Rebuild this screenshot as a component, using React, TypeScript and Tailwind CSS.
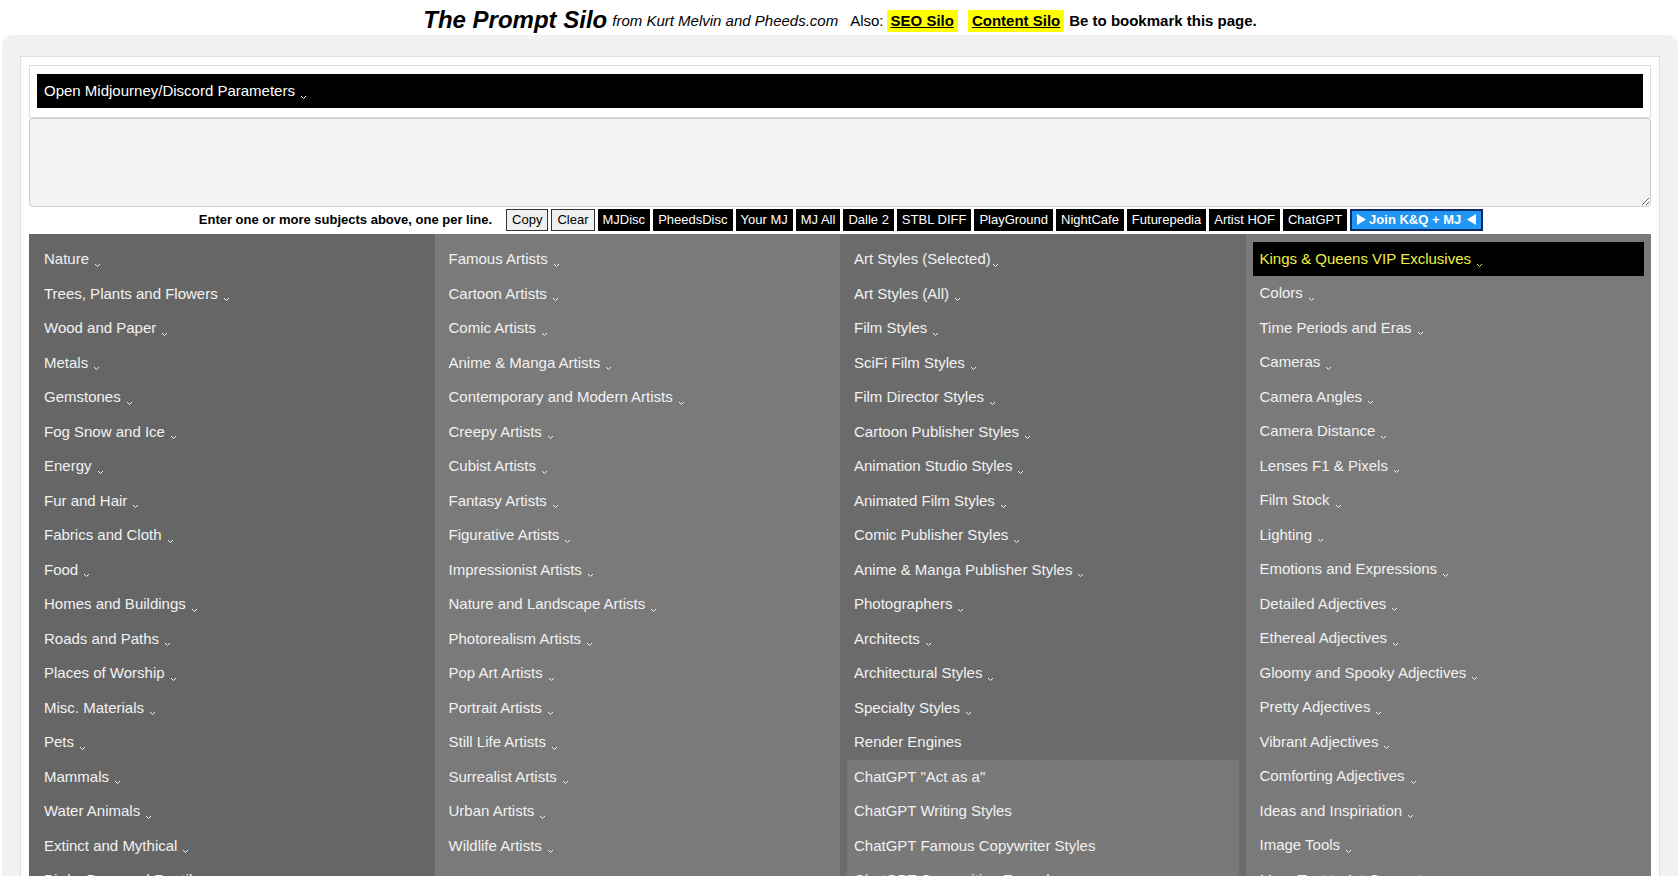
import React from "react";

type Item = { label: string; arrow?: boolean; tight?: boolean };

const col1: Item[] = [
  "Nature",
  "Trees, Plants and Flowers",
  "Wood and Paper",
  "Metals",
  "Gemstones",
  "Fog Snow and Ice",
  "Energy",
  "Fur and Hair",
  "Fabrics and Cloth",
  "Food",
  "Homes and Buildings",
  "Roads and Paths",
  "Places of Worship",
  "Misc. Materials",
  "Pets",
  "Mammals",
  "Water Animals",
  "Extinct and Mythical",
  "Birds, Bugs and Reptiles",
].map((label) => ({ label, arrow: true }));

const col2: Item[] = [
  "Famous Artists",
  "Cartoon Artists",
  "Comic Artists",
  "Anime & Manga Artists",
  "Contemporary and Modern Artists",
  "Creepy Artists",
  "Cubist Artists",
  "Fantasy Artists",
  "Figurative Artists",
  "Impressionist Artists",
  "Nature and Landscape Artists",
  "Photorealism Artists",
  "Pop Art Artists",
  "Portrait Artists",
  "Still Life Artists",
  "Surrealist Artists",
  "Urban Artists",
  "Wildlife Artists",
].map((label) => ({ label, arrow: true }));

const col3: Item[] = [
  { label: "Art Styles (Selected)", arrow: true, tight: true },
  ...[
    "Art Styles (All)",
    "Film Styles",
    "SciFi Film Styles",
    "Film Director Styles",
    "Cartoon Publisher Styles",
    "Animation Studio Styles",
    "Animated Film Styles",
    "Comic Publisher Styles",
    "Anime & Manga Publisher Styles",
    "Photographers",
    "Architects",
    "Architectural Styles",
    "Specialty Styles",
  ].map((label) => ({ label, arrow: true })),
  { label: "Render Engines" },
];

const chatGpt: Item[] = [
  { label: 'ChatGPT "Act as a"' },
  { label: "ChatGPT Writing Styles" },
  { label: "ChatGPT Famous Copywriter Styles" },
  { label: "ChatGPT Copywriting Formulas" },
];

const col4: Item[] = [
  "Colors",
  "Time Periods and Eras",
  "Cameras",
  "Camera Angles",
  "Camera Distance",
  "Lenses F1 & Pixels",
  "Film Stock",
  "Lighting",
  "Emotions and Expressions",
  "Detailed Adjectives",
  "Ethereal Adjectives",
  "Gloomy and Spooky Adjectives",
  "Pretty Adjectives",
  "Vibrant Adjectives",
  "Comforting Adjectives",
  "Ideas and Inspiriation",
  "Image Tools",
  "More Text to Art Generators",
].map((label) => ({ label, arrow: true }));

const linkButtons = [
  "MJDisc",
  "PheedsDisc",
  "Your MJ",
  "MJ All",
  "Dalle 2",
  "STBL DIFF",
  "PlayGround",
  "NightCafe",
  "Futurepedia",
  "Artist HOF",
  "ChatGPT",
];

const Chevron = ({ tight }: { tight?: boolean }) => (
  <svg
    width="7"
    height="5"
    viewBox="0 0 7 5"
    className={tight ? "ml-[1px] translate-y-[6px]" : "ml-[5px] translate-y-[6px]"}
  >
    <path d="M1 1l2.5 2.5L6 1" fill="none" stroke="currentColor" strokeWidth="1" />
  </svg>
);

// little play-style arrows around the join label
const Tri = ({ left }: { left?: boolean }) => (
  <svg width="9" height="11" viewBox="0 0 9 11">
    <path d={left ? "M9 0v11L0 5.5z" : "M0 0v11l9-5.5z"} fill="white" />
  </svg>
);

const Row = ({ item }: { item: Item }) => (
  <div className="h-[34.5px] px-[7px] flex items-center text-[15px] text-[#f2f2f2]">
    <span>{item.label}</span>
    {item.arrow && <Chevron tight={item.tight} />}
  </div>
);

export default function App() {
  return (
    <div className="min-h-screen bg-white font-['Liberation_Sans',Arial,sans-serif] text-black">
      <header className="h-[35px] flex items-center justify-center whitespace-nowrap pt-[4px]">
        <span className="text-[24px] font-bold italic">The Prompt Silo</span>
        <span className="ml-[5px] text-[15px] italic mt-[3px]">from Kurt Melvin and Pheeds.com</span>
        <span className="ml-[12px] text-[15px] mt-[3px]">Also:</span>
        <a className="ml-[3px] mt-[3px] px-[4px] bg-[#ffff00] text-[15px] font-bold underline">SEO Silo</a>
        <a className="ml-[10px] mt-[3px] px-[4px] bg-[#ffff00] text-[15px] font-bold underline">Content Silo</a>
        <span className="ml-[5px] mt-[3px] text-[15px] font-bold">Be to bookmark this page.</span>
      </header>

      <main className="mx-[2px] rounded-t-[10px] bg-[#f1f1f1] pt-[21px] px-[18px]">
        <div className="bg-white border border-[#dddddd] px-[8px] pt-[8px]">
          <div className="border border-[#dddddd] px-[7px] pt-[8px] pb-[9px]">
            <div className="h-[34px] bg-black px-[7px] flex items-center text-[15px] text-white">
              <span>Open Midjourney/Discord Parameters</span>
              <Chevron />
            </div>
          </div>

          <textarea className="block w-full h-[89px] bg-[#f3f3f3] border border-[#cccccc] rounded-[4px] outline-none" />

          <div className="h-[25px] flex items-center justify-center whitespace-nowrap text-[13px]">
            <span className="font-bold mr-[14px] ml-[2px]">Enter one or more subjects above, one per line.</span>
            <div className="flex gap-[3px]">
              <button className="h-[22px] px-[5px] bg-[#efefef] border border-[#333] text-black">Copy</button>
              <button className="h-[22px] px-[5px] bg-[#efefef] border border-[#333] text-black">Clear</button>
              {linkButtons.map((b) => (
                <button key={b} className="h-[22px] px-[5px] bg-black text-white">
                  {b}
                </button>
              ))}
              <button className="h-[22px] px-[5px] bg-[#2196f3] border-2 border-[#0d2a66] text-white font-bold flex items-center gap-[3px]">
                <Tri />
                <span>Join K&amp;Q + MJ</span>
                <span className="ml-[3px] flex">
                  <Tri left />
                </span>
              </button>
            </div>
          </div>

          <div className="grid grid-cols-4 mt-[2px]">
            <div className="bg-[#666666] p-[7px] pl-[8px] pt-[8px]">
              {col1.map((i) => (
                <Row key={i.label} item={i} />
              ))}
            </div>
            <div className="bg-[#7a7a7a] p-[7px] pt-[8px]">
              {col2.map((i) => (
                <Row key={i.label} item={i} />
              ))}
            </div>
            <div className="bg-[#6b6b6b] p-[7px] pt-[8px]">
              {col3.map((i) => (
                <Row key={i.label} item={i} />
              ))}
              <div className="bg-[#797979]">
                {chatGpt.map((i) => (
                  <Row key={i.label} item={i} />
                ))}
              </div>
            </div>
            <div className="bg-[#7a7a7a] p-[7px] pt-[8px]">
              <div className="h-[34px] bg-black px-[7px] flex items-center text-[15px] text-[#eeee44]">
                <span>Kings &amp; Queens VIP Exclusives</span>
                <Chevron />
              </div>
              {col4.map((i) => (
                <Row key={i.label} item={i} />
              ))}
            </div>
          </div>
        </div>
      </main>
    </div>
  );
}
